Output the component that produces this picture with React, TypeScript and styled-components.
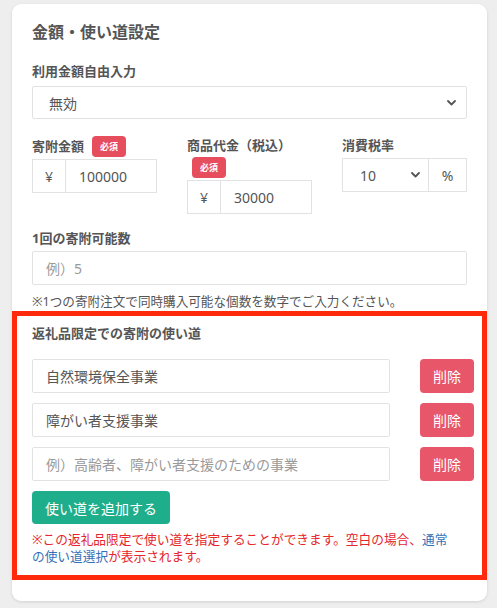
import React from "react";
import styled, { createGlobalStyle } from "styled-components";

const GlobalStyle = createGlobalStyle`
  * { box-sizing: border-box; }
  body {
    margin: 0;
    background: #eeeeee;
    font-family: "Noto Sans", "Noto Sans CJK JP", sans-serif;
    color: #555;
  }
`;

const Page = styled.div`
  padding: 4px 10px 6px 12px;
`;

const Card = styled.div`
  width: 475px;
  background: #fff;
  border-radius: 9px;
  box-shadow: 0 1px 3px rgba(0, 0, 0, 0.12);
  padding: 17px 20px 21px;
`;

const Title = styled.h2`
  margin: 0 0 19px;
  font-size: 16px;
  line-height: 22px;
  font-weight: 700;
  color: #555;
`;

const Label = styled.div<{ $mb?: number }>`
  font-size: 13px;
  line-height: 18px;
  font-weight: 700;
  color: #555;
  margin-bottom: ${(p) => p.$mb ?? 6}px;
`;

const FieldBlock = styled.div<{ $mb?: number }>`
  margin-bottom: ${(p) => p.$mb ?? 0}px;
`;

const SelectBox = styled.div<{ $w?: string }>`
  display: flex;
  align-items: center;
  justify-content: space-between;
  width: ${(p) => p.$w ?? "100%"};
  height: 33px;
  border: 1px solid #e2e2e2;
  border-radius: 2px;
  padding: 0 10px 0 16px;
  font-size: 14px;
  color: #555;
  background: #fff;
`;

const Chevron = () => (
  <svg width="9" height="6" viewBox="0 0 9 6" fill="none">
    <path d="M1 1l3.5 3.5L8 1" stroke="#555" strokeWidth="1.8" strokeLinecap="round" strokeLinejoin="round" />
  </svg>
);

const Row3 = styled.div`
  display: grid;
  grid-template-columns: repeat(3, 125px);
  column-gap: 30px;
  align-items: start;
  margin-bottom: 15px;
`;

const ColLabel = styled.div`
  display: flex;
  flex-wrap: wrap;
  align-items: center;
  column-gap: 8px;
  row-gap: 1px;
  font-size: 13px;
  line-height: 20px;
  font-weight: 700;
  color: #555;
  margin-bottom: 2px;
`;

const ColText = styled.span`
  position: relative;
  top: -1px;
`;

const Badge = styled.span<{ $ml?: number }>`
  display: inline-flex;
  align-items: center;
  justify-content: center;
  width: 34px;
  height: 21px;
  margin-left: ${(p) => p.$ml ?? 0}px;
  background: #e64d5d;
  color: #fff;
  font-size: 9px;
  font-weight: 700;
  border-radius: 4px;
`;

const Group = styled.div`
  display: flex;
  height: 34px;
`;

const Addon = styled.div<{ $w: number; $side: "left" | "right" }>`
  width: ${(p) => p.$w}px;
  flex: none;
  display: flex;
  align-items: center;
  justify-content: center;
  border: 1px solid #e2e2e2;
  ${(p) => (p.$side === "left" ? "border-right: none;" : "border-left: none;")}
  font-size: 14px;
  color: #555;
  background: #fff;
`;

const GroupInput = styled.div`
  flex: 1;
  display: flex;
  align-items: center;
  border: 1px solid #e2e2e2;
  padding-left: 13px;
  font-size: 14px;
  color: #555;
`;

const GroupSelect = styled.div`
  flex: 1;
  display: flex;
  align-items: center;
  justify-content: space-between;
  border: 1px solid #e2e2e2;
  padding: 0 8px 0 17px;
  font-size: 14px;
  color: #555;
`;

const TextInput = styled.div<{ $placeholder?: boolean; $w?: string }>`
  width: ${(p) => p.$w ?? "100%"};
  height: 34px;
  display: flex;
  align-items: center;
  border: 1px solid #e2e2e2;
  border-radius: 2px;
  padding-left: 13px;
  font-size: 14px;
  color: ${(p) => (p.$placeholder ? "#9a9a9a" : "#555")};
  background: #fff;
`;

const Help = styled.div`
  margin-top: 8px;
  font-size: 12.6px;
  line-height: 18px;
  color: #555;
`;

const RedBox = styled.div`
  margin: 0 -20px;
  border: 5px solid #ff2a0c;
  padding: 8px 8px 10px 15px;
`;

const UseRow = styled.div`
  display: flex;
  align-items: center;
  justify-content: space-between;
  margin-bottom: 10px;
`;

const DeleteButton = styled.button`
  width: 54px;
  height: 34px;
  border: none;
  border-radius: 4px;
  background: #e8566a;
  color: #fff;
  font-family: inherit;
  font-size: 14px;
  padding: 0;
`;

const AddButton = styled.button`
  height: 33px;
  border: none;
  border-radius: 4px;
  background: #1fae8b;
  color: #fff;
  font-family: inherit;
  font-size: 14px;
  padding: 0 13px;
  margin-bottom: 7px;
  display: block;
`;

const Note = styled.div`
  width: 426px;
  font-size: 12.7px;
  line-height: 17px;
  color: #e5262c;
`;

const NoteLink = styled.span`
  color: #3571b8;
`;

export default function App() {
  return (
    <>
      <GlobalStyle />
      <Page>
        <Card>
          <Title>金額・使い道設定</Title>

          <FieldBlock $mb={17}>
            <Label>利用金額自由入力</Label>
            <SelectBox>
              <span>無効</span>
              <Chevron />
            </SelectBox>
          </FieldBlock>

          <Row3>
            <div>
              <ColLabel>
                <ColText>寄附金額</ColText>
                <Badge>必須</Badge>
              </ColLabel>
              <Group>
                <Addon $w={33} $side="left">¥</Addon>
                <GroupInput>100000</GroupInput>
              </Group>
            </div>
            <div>
              <ColLabel>
                <ColText>商品代金（税込）</ColText>
                <Badge $ml={5}>必須</Badge>
              </ColLabel>
              <Group>
                <Addon $w={33} $side="left">¥</Addon>
                <GroupInput>30000</GroupInput>
              </Group>
            </div>
            <div>
              <ColLabel>
                <ColText>消費税率</ColText>
              </ColLabel>
              <Group>
                <GroupSelect>
                  <span>10</span>
                  <Chevron />
                </GroupSelect>
                <Addon $w={38} $side="right">%</Addon>
              </Group>
            </div>
          </Row3>

          <FieldBlock>
            <Label $mb={4}>1回の寄附可能数</Label>
            <TextInput $placeholder>例）5</TextInput>
            <Help>※1つの寄附注文で同時購入可能な個数を数字でご入力ください。</Help>
          </FieldBlock>

          <RedBox>
            <Label $mb={17}>返礼品限定での寄附の使い道</Label>
            <UseRow>
              <TextInput $w="358px">自然環境保全事業</TextInput>
              <DeleteButton>削除</DeleteButton>
            </UseRow>
            <UseRow>
              <TextInput $w="358px">障がい者支援事業</TextInput>
              <DeleteButton>削除</DeleteButton>
            </UseRow>
            <UseRow>
              <TextInput $w="358px" $placeholder>例）高齢者、障がい者支援のための事業</TextInput>
              <DeleteButton>削除</DeleteButton>
            </UseRow>
            <AddButton>使い道を追加する</AddButton>
            <Note>
              ※この返礼品限定で使い道を指定することができます。空白の場合、<NoteLink>通常の使い道選択</NoteLink>が表示されます。
            </Note>
          </RedBox>
        </Card>
      </Page>
    </>
  );
}
